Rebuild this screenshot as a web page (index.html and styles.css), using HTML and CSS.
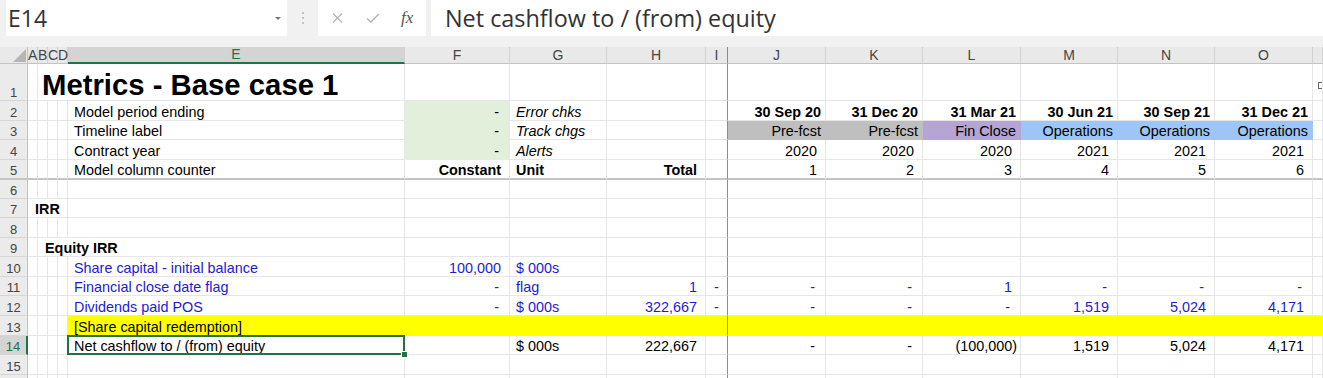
FILE: index.html
```html
<!DOCTYPE html>
<html lang="en">
<head>
    <meta charset="UTF-8">
    <title>Metrics - Base case 1</title>
    <link rel="stylesheet" href="styles.css">
</head>
<body>
    <div class="toolbar">
        <div class="namebox">E14<span class="caret"></span></div>
        <div class="grip">
            <svg width="4" height="14" viewBox="0 0 4 14"><circle cx="2" cy="2" r="1.1"/><circle cx="2" cy="7" r="1.1"/><circle cx="2" cy="12" r="1.1"/></svg>
        </div>
        <div class="fxbox">
            <svg class="ic-x" width="11" height="10" viewBox="0 0 11 10"><path d="M1 0.5L10 9.5M10 0.5L1 9.5"/></svg>
            <svg class="ic-ok" width="14" height="10" viewBox="0 0 14 10"><path d="M1 5.5L4.8 9L13 1"/></svg>
            <span class="fx">fx</span>
        </div>
        <div class="formula">Net cashflow to / (from) equity</div>
    </div>

    <table class="sheet">
        <colgroup>
            <col style="width:28px"><col style="width:10px"><col style="width:10px"><col style="width:10px"><col style="width:10px">
            <col style="width:337px"><col style="width:105px"><col style="width:97px"><col style="width:99px"><col style="width:22px">
            <col style="width:98px"><col style="width:97px"><col style="width:98px"><col style="width:97px"><col style="width:97px"><col style="width:98px">
            <col style="width:10px">
        </colgroup>
        <tr class="hdr">
            <th class="corner"><span class="tri"></span></th>
            <th class="col">A</th><th class="col">B</th><th class="col">C</th><th class="col">D</th>
            <th class="col act">E</th><th class="col">F</th><th class="col">G</th><th class="col">H</th><th class="col fz">I</th>
            <th class="col">J</th><th class="col">K</th><th class="col">L</th><th class="col">M</th><th class="col">N</th><th class="col">O</th><th class="col"></th>
        </tr>
        <tr class="h37">
            <th class="rh">1</th>
            <td></td>
            <td colspan="4" class="title">Metrics - Base case 1</td>
            <td></td><td></td><td></td><td class="fz"></td>
            <td></td><td></td><td></td><td></td><td></td><td></td>
            <td class="mid"><span class="mark"></span></td>
        </tr>
        <tr class="h20">
            <th class="rh">2</th>
            <td></td><td></td><td></td><td></td>
            <td class="t">Model period ending</td>
            <td class="d fg">-</td>
            <td class="t i">Error chks</td>
            <td></td><td class="fz"></td>
            <td class="r b">30 Sep 20</td><td class="r b">31 Dec 20</td><td class="r b">31 Mar 21</td>
            <td class="r b">30 Jun 21</td><td class="r b">30 Sep 21</td><td class="r b">31 Dec 21</td>
            <td></td>
        </tr>
        <tr class="h19">
            <th class="rh">3</th>
            <td></td><td></td><td></td><td></td>
            <td class="t">Timeline label</td>
            <td class="d fg">-</td>
            <td class="t i">Track chgs</td>
            <td></td><td class="fz"></td>
            <td class="r fgr">Pre-fcst</td><td class="r fgr">Pre-fcst</td><td class="r fp">Fin Close</td>
            <td class="r fb">Operations</td><td class="r fb">Operations</td><td class="r fb">Operations</td>
            <td></td>
        </tr>
        <tr class="h20">
            <th class="rh">4</th>
            <td></td><td></td><td></td><td></td>
            <td class="t">Contract year</td>
            <td class="d fg">-</td>
            <td class="t i">Alerts</td>
            <td></td><td class="fz"></td>
            <td class="n">2020</td><td class="n">2020</td><td class="n">2020</td>
            <td class="n">2021</td><td class="n">2021</td><td class="n">2021</td>
            <td></td>
        </tr>
        <tr class="h20 split">
            <th class="rh">5</th>
            <td></td><td></td><td></td><td></td>
            <td class="t">Model column counter</td>
            <td class="n b">Constant</td>
            <td class="t b">Unit</td>
            <td class="n b">Total</td>
            <td class="fz"></td>
            <td class="n">1</td><td class="n">2</td><td class="n">3</td>
            <td class="n">4</td><td class="n">5</td><td class="n">6</td>
            <td></td>
        </tr>
        <tr class="h19">
            <th class="rh">6</th>
            <td></td><td></td><td></td><td></td><td></td><td></td><td></td><td></td><td class="fz"></td>
            <td></td><td></td><td></td><td></td><td></td><td></td><td></td>
        </tr>
        <tr class="h19">
            <th class="rh">7</th>
            <td colspan="4" class="t b lead">IRR</td>
            <td></td><td></td><td></td><td></td><td class="fz"></td>
            <td></td><td></td><td></td><td></td><td></td><td></td><td></td>
        </tr>
        <tr class="h20">
            <th class="rh">8</th>
            <td></td><td></td><td></td><td></td><td></td><td></td><td></td><td></td><td class="fz"></td>
            <td></td><td></td><td></td><td></td><td></td><td></td><td></td>
        </tr>
        <tr class="h19">
            <th class="rh">9</th>
            <td></td>
            <td colspan="4" class="t b lead">Equity IRR</td>
            <td></td><td></td><td></td><td class="fz"></td>
            <td></td><td></td><td></td><td></td><td></td><td></td><td></td>
        </tr>
        <tr class="h20 blue">
            <th class="rh">10</th>
            <td></td><td></td><td></td><td></td>
            <td class="t">Share capital - initial balance</td>
            <td class="n">100,000</td>
            <td class="t">$ 000s</td>
            <td></td><td class="fz"></td>
            <td></td><td></td><td></td><td></td><td></td><td></td><td></td>
        </tr>
        <tr class="h19 blue">
            <th class="rh">11</th>
            <td></td><td></td><td></td><td></td>
            <td class="t">Financial close date flag</td>
            <td class="d">-</td>
            <td class="t">flag</td>
            <td class="n">1</td>
            <td class="dl fz">-</td>
            <td class="d">-</td><td class="d">-</td><td class="n">1</td>
            <td class="d">-</td><td class="d">-</td><td class="d">-</td>
            <td></td>
        </tr>
        <tr class="h20 blue">
            <th class="rh">12</th>
            <td></td><td></td><td></td><td></td>
            <td class="t">Dividends paid POS</td>
            <td class="d">-</td>
            <td class="t">$ 000s</td>
            <td class="n">322,667</td>
            <td class="dl fz">-</td>
            <td class="d">-</td><td class="d">-</td><td class="d">-</td>
            <td class="n">1,519</td><td class="n">5,024</td><td class="n">4,171</td>
            <td></td>
        </tr>
        <tr class="h20">
            <th class="rh">13</th>
            <td></td><td></td><td></td><td></td>
            <td class="t fy">[Share capital redemption]</td>
            <td class="fy"></td><td class="fy"></td><td class="fy"></td><td class="fy fz"></td>
            <td class="fy"></td><td class="fy"></td><td class="fy"></td><td class="fy"></td><td class="fy"></td><td class="fy"></td><td class="fy"></td>
        </tr>
        <tr class="h19">
            <th class="rh act">14</th>
            <td></td><td></td><td></td><td></td>
            <td class="t sel">Net cashflow to / (from) equity</td>
            <td></td>
            <td class="t">$ 000s</td>
            <td class="n">222,667</td>
            <td class="fz"></td>
            <td class="d">-</td><td class="d">-</td><td class="neg">(100,000)</td>
            <td class="n">1,519</td><td class="n">5,024</td><td class="n">4,171</td>
            <td></td>
        </tr>
        <tr class="h20">
            <th class="rh">15</th>
            <td></td><td></td><td></td><td></td><td></td><td></td><td></td><td></td><td class="fz"></td>
            <td></td><td></td><td></td><td></td><td></td><td></td><td></td>
        </tr>
        <tr class="h20">
            <th class="rh"></th>
            <td></td><td></td><td></td><td></td><td></td><td></td><td></td><td></td><td class="fz"></td>
            <td></td><td></td><td></td><td></td><td></td><td></td><td></td>
        </tr>
    </table>
</body>
</html>
```

FILE: styles.css
```css
body {
    margin: 0;
    overflow: hidden;
    background: #fff;
    font-family: "Liberation Sans", Arial, sans-serif;
}

/* formula bar */
.toolbar {
    display: flex;
    height: 47px;
    padding-bottom: 11px;
    box-sizing: border-box;
    background: #f1f1f1;
}
.namebox {
    display: flex;
    align-items: center;
    width: 279px;
    margin-left: 6px;
    padding-left: 2px;
    background: #fff;
    font-family: "Open Sans", "Noto Sans", sans-serif;
    font-size: 23px;
    color: #333;
}
.caret {
    margin-left: auto;
    margin-right: 6px;
    border-left: 3px solid transparent;
    border-right: 3px solid transparent;
    border-top: 3px solid #777;
}
.grip {
    width: 31px;
    display: flex;
    align-items: center;
    justify-content: center;
}
.grip svg {
    fill: #b9b9b9;
}
.fxbox {
    width: 108px;
    display: flex;
    align-items: center;
    background: #fff;
}
.fxbox svg path {
    fill: none;
    stroke: #b4b4b4;
    stroke-width: 1.3;
}
.ic-x {
    margin-left: 14px;
}
.ic-ok {
    margin-left: 23px;
}
.fx {
    margin-left: 21px;
    font-family: "Liberation Serif", serif;
    font-style: italic;
    font-size: 17px;
    color: #555;
}
.formula {
    flex: 1;
    display: flex;
    align-items: center;
    margin-left: 5px;
    padding-left: 14px;
    background: #fff;
    font-family: "Open Sans", "Noto Sans", sans-serif;
    font-size: 23.4px;
    color: #333;
}

/* grid */
.sheet {
    border-collapse: separate;
    border-spacing: 0;
    table-layout: fixed;
    width: 1323px;
}
.sheet td {
    padding: 0;
    border-right: 1px solid #e6e6e6;
    border-bottom: 1px solid #e6e6e6;
    vertical-align: bottom;
    font-size: 14.4px;
    line-height: 16px;
    color: #000;
    white-space: nowrap;
    overflow: hidden;
}
.hdr { height: 17px; }
.h37 { height: 37px; }
.h20 { height: 20px; }
.h19 { height: 19px; }

.col {
    padding: 0;
    background: #e9e9e9;
    border-right: 1px solid #d2d2d2;
    border-bottom: 1px solid #c3c3c3;
    font-weight: normal;
    font-size: 14px;
    line-height: 15px;
    color: #444;
    vertical-align: bottom;
    text-align: center;
    overflow: visible;
}
.col.act {
    background: #d4d4d4;
    color: #217346;
    border-bottom: 2px solid #217346;
}
.corner {
    padding: 0 1px 1px 0;
    background: #e9e9e9;
    border-right: 1px solid #c3c3c3;
    border-bottom: 1px solid #c3c3c3;
    vertical-align: bottom;
}
.tri {
    display: block;
    width: 13px;
    height: 13px;
    margin-left: auto;
    background: #b5b5b5;
    clip-path: polygon(100% 0, 100% 100%, 0 100%);
}
.rh {
    padding: 0;
    background: #ebebeb;
    border-right: 1px solid #c3c3c3;
    border-bottom: 1px solid #d6d6d6;
    font-weight: normal;
    font-size: 13px;
    line-height: 15px;
    color: #444;
    vertical-align: bottom;
    text-align: center;
}
.rh.act {
    background: #d4d4d4;
    color: #217346;
    border-right: 2px solid #217346;
}

/* frozen panes */
.sheet .fz, .col.fz {
    border-right: 1px solid #8c8c8c;
}
.split td, .split th {
    border-bottom: 2px solid #c4c4c4;
}

/* cell formats */
.sheet .t { padding-left: 6px; }
.sheet .lead { padding-left: 7px; overflow: visible; }
.sheet .r { text-align: right; padding-right: 4px; }
.sheet .n { text-align: right; padding-right: 8px; }
.sheet .neg { text-align: right; padding-right: 3px; }
.sheet .d { text-align: right; padding-right: 10px; }
.sheet .dl { padding-left: 8px; }
.sheet .b { font-weight: bold; }
.sheet .i { font-style: italic; }
.blue td { color: #1c1cd2; }

.sheet .title {
    padding: 0 0 0 4px;
    font-size: 29.3px;
    line-height: 30px;
    font-weight: bold;
    overflow: visible;
}
.sheet .mid {
    vertical-align: middle;
    padding-top: 4px;
}
.mark {
    display: inline-block;
    width: 4px;
    height: 5px;
    margin-left: 5px;
    border: 1px solid #666;
    border-right: none;
}

.sheet .fg { background: #e2efda; border-color: #e2efda; }
.sheet .fgr { background: #bfbfbf; border-color: #bfbfbf; }
.sheet .fp { background: #b4a5d4; border-color: #b4a5d4; }
.sheet .fb { background: #9dc6f7; border-color: #9dc6f7; }
.sheet .fy { background: #ffff00; border-color: #ffff00; }
.sheet .fy.fz { border-right-color: #8c8c8c; }

/* selected cell */
.sheet .sel {
    position: relative;
    overflow: visible;
}
.sel::after {
    content: "";
    position: absolute;
    left: -1px;
    top: -1px;
    right: -1px;
    bottom: -1px;
    border: 2px solid #217346;
}
.sel::before {
    content: "";
    position: absolute;
    right: -4px;
    bottom: -4px;
    width: 5px;
    height: 5px;
    background: #217346;
    border: 1px solid #fff;
    z-index: 1;
}
```
